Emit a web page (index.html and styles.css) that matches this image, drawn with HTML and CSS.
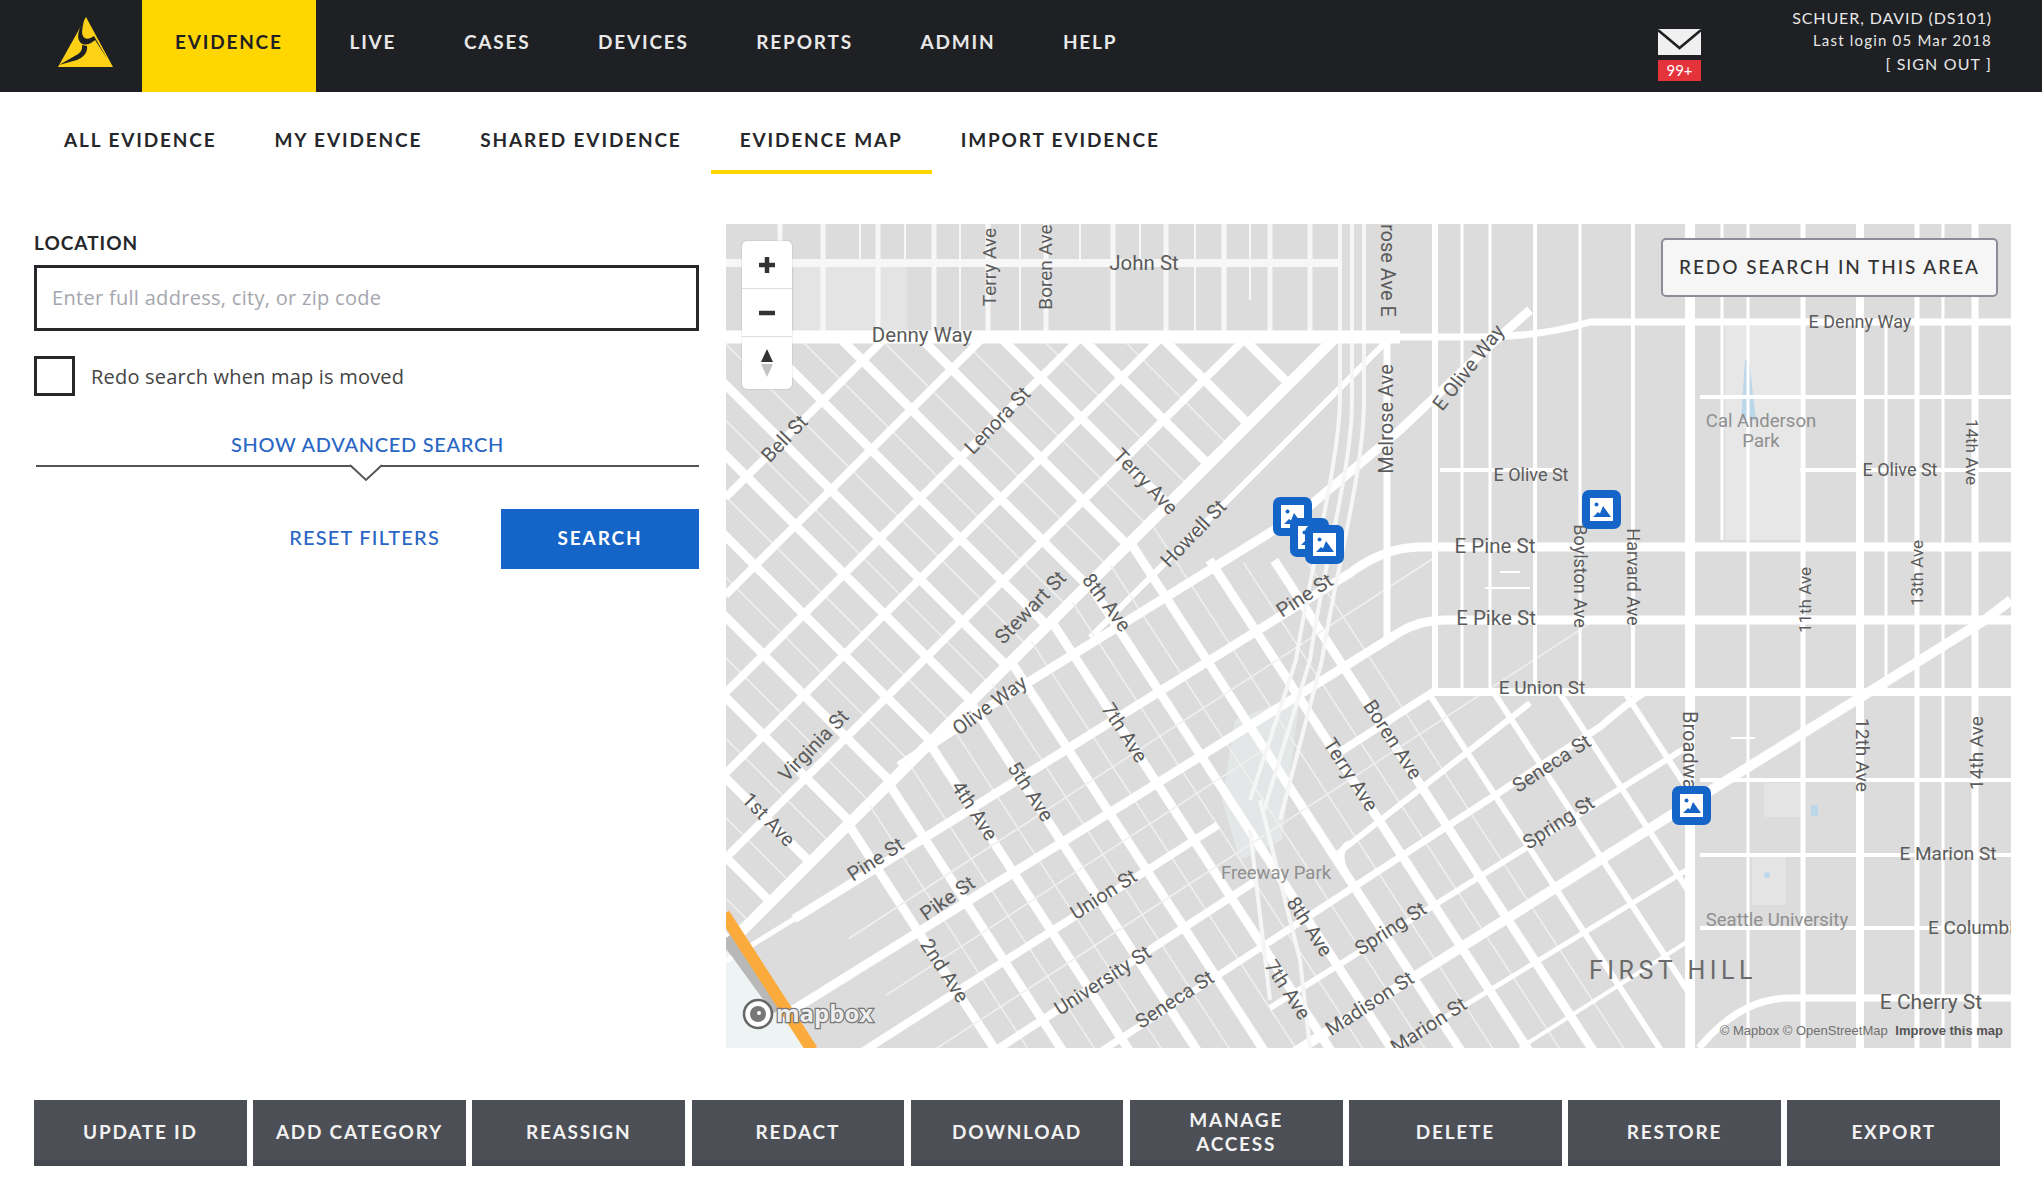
FILE: index.html
```html
<!DOCTYPE html>
<html lang="en">
<head>
<meta charset="UTF-8" />
<meta name="viewport" content="width=device-width, initial-scale=1.0">
<title>Evidence Map</title>
<link rel="stylesheet" href="styles.css">
</head>
<body>
  <header class="topbar">
    <a class="logo" href="#">
      <svg width="60" height="54" viewBox="57 13 60 54">
        <path d="M87 15 L114 65 L59 65 Z" fill="#fcd116"/>
        <path d="M85 18 C80 26 77 35 81 40 C85 45 92 42 96 38 L109 58 L95 34 C91 37 86 38 84 34 C82 30 84 24 85 18Z" fill="#1e2023"/>
        <path d="M83 43 C84 49 80 52 74 55 L60 63 L78 58 C85 55 89 50 88 44 Z" fill="#1e2023"/>
      </svg>
    </a>
    <nav class="mainnav">
      <a class="active" href="#">EVIDENCE</a>
      <a href="#">LIVE</a>
      <a href="#">CASES</a>
      <a href="#">DEVICES</a>
      <a href="#">REPORTS</a>
      <a href="#">ADMIN</a>
      <a href="#">HELP</a>
    </nav>
    <div class="inbox">
      <svg width="43" height="26" viewBox="0 0 43 26">
        <rect width="43" height="26" fill="#f0f0f0"/>
        <path d="M0 1 L21.5 19 L43 1" fill="none" stroke="#1e2023" stroke-width="2.5"/>
      </svg>
      <span class="badge">99+</span>
    </div>
    <div class="userinfo">
      <div>SCHUER, DAVID (DS101)</div>
      <div class="small">Last login 05 Mar 2018</div>
      <div class="signout">[ SIGN OUT ]</div>
    </div>
  </header>

  <nav class="subnav">
    <a href="#">ALL EVIDENCE</a>
    <a href="#">MY EVIDENCE</a>
    <a href="#">SHARED EVIDENCE</a>
    <a class="active" href="#">EVIDENCE MAP</a>
    <a href="#">IMPORT EVIDENCE</a>
  </nav>

  <main class="content">
    <section class="filters">
      <label class="field-label" for="location">LOCATION</label>
      <input class="location" id="location" type="text" placeholder="Enter full address, city, or zip code">
      <label class="redo-check">
        <input type="checkbox">
        <span>Redo search when map is moved</span>
      </label>
      <div class="advanced">
        <a href="#">SHOW ADVANCED SEARCH</a>
        <svg class="notch" width="34" height="18" viewBox="0 0 34 18">
          <path d="M1 1 L17 16 L33 1" fill="#fff" stroke="#555" stroke-width="2"/>
          <rect x="2" y="0" width="30" height="1" fill="#fff"/>
        </svg>
      </div>
      <div class="filter-actions">
        <a href="#">RESET FILTERS</a>
        <button>SEARCH</button>
      </div>
    </section>

    <section class="map">
      <svg class="map-canvas" width="1285" height="824" viewBox="726 224 1285 824">
        <defs>
          <symbol id="pin" viewBox="0 0 39 39">
            <rect width="39" height="39" rx="7" fill="#1565c8"/>
            <rect x="8" y="8" width="23" height="23" fill="#fff"/>
            <circle cx="14.5" cy="14.5" r="2" fill="#1565c8"/>
            <path d="M11 27 L16 22 L18 23.500 L21 16 L29 27 Z" fill="#1565c8"/>
          </symbol>
        </defs>

        <rect x="726" y="224" width="1285" height="824" fill="#dcdcdc"/>

        <!-- light areas -->
        <rect x="794" y="264" width="113" height="68" fill="#e4e4e4"/>
        <rect x="1725" y="325" width="75" height="215" fill="#e7e7e7"/>
        <rect x="1764" y="783" width="41" height="34" fill="#e4e4e4"/>
        <rect x="1752" y="857" width="34" height="48" fill="#e4e4e4"/>
        <path d="M1235 720 L1300 695 L1282 840 L1240 860 L1222 800 Z" fill="#e3e7e7"/>
        <path d="M726 950 L810 1048 L726 1048 Z" fill="#eef3f3"/>
        <path d="M1745 360 L1749 360 L1756 420 L1741 420 Z" fill="#bcd6ea"/>
        <rect x="1811" y="805" width="7" height="11" fill="#bcd6ea"/>
        <circle cx="1767" cy="875" r="3" fill="#bcd6ea"/>

        <!-- north of denny, straight grid -->
        <g stroke="#f7f7f7" fill="none">
          <path stroke-width="5" d="M780 224V337M823 224V337M878 224V337M934 224V337M988 224V337M1046 224V337M1113 224V337M1166 224V337M1224 224V337M1270 224V337M1310 224V337"/>
          <path stroke-width="2" d="M860 224V264M905 224V264M960 224V337M1020 224V337M1080 224V264M1140 224V264M1195 224V337M1250 224V300"/>
          <path stroke-width="8" d="M726 263H1340"/>
        </g>

        <!-- belltown grid, 45 degrees -->
        <g transform="matrix(.707 -.707 .707 .707 0 0)" stroke="#fff" fill="none">
          <path stroke-width="1.500" stroke="#f0f0f0" d="M-122 354V1183M-65 411V1183M-9 467V1183M48 524V1183M105 581V1183M162 638V1183M216 692V1183M270 746V1183M326 802V1183M383 859V1183M440 916V1183M497 973V1183M554 1030V1183"/>
          <path stroke-width="9" d="M-150 326V1183M-93 383V1183M-37 439V1183M20 496V1183M77 553V1183M134 610V1183M191 667V1183M241 717V1183M298 774V1183M355 831V1183M412 888V1183M469 945V1183M526 1002V1183M583 1059V1183M640 1116V1183"/>
          <path stroke-width="8" d="M161 865H388M92 934H457M23 1003H526M-34 1060H583M-94 1120H643"/>
          <path stroke-width="11" d="M-157 1183H707"/>
          <path stroke-width="6" d="M320 1222H745"/>
        </g>

        <!-- downtown grid -->
        <g transform="matrix(.838 -.545 .545 .838 0 0)" stroke="#fff" fill="none">
          <path stroke-width="1.500" stroke="#f0f0f0" d="M290 1150V2000M346 1140V2000M402 1130V2000M459 1115V2000M515 1100V2000M571 1090V2000M623 1080V2000M680 1070V2000M736 1150V2000M790 1180V2000"/>
          <path stroke-width="9" d="M262 1153V2000M318 1142V2000M374 1130V2000M431 1118V2000M487 1106V2000M543 1094V2000M595 1083V2000M652 1071V2000M709 1129V2000M763 1165V2000"/>
          <path stroke-width="6" d="M820 1359V1842M875 1395V1757M930 1431V1673M985 1466V1588"/>
          <path stroke-width="1.500" stroke="#f0f0f0" d="M200 1250H900M200 1318H650M200 1390H1000"/>
        </g>

        <!-- main diagonal streets with their bends -->
        <g stroke="#fff" fill="none">
          <path stroke-width="9" d="M899 766L990 706L1300 514L1400 430L1490 345L1530 310"/>
          <path stroke-width="9" d="M794 919L1350 573Q1385 547 1420 547H2011"/>
          <path stroke-width="5" d="M726 961L794 919"/>
          <path stroke-width="9" d="M780 1018L1400 632Q1420 620 1445 620H2011"/>
          <path stroke-width="8" d="M837 1068L1218 825"/>
          <path stroke-width="8" d="M1340 752L1433 692H2011"/>
          <path stroke-width="8" d="M944 1084L1254 882"/>
          <path stroke-width="6" d="M1350 843Q1336 850 1345 870"/>
          <path stroke-width="6" d="M1336 855L1530 703"/>
          <path stroke-width="7" d="M1100 1052L1600 727Q1625 705 1645 692"/>
          <path stroke-width="6" d="M1270 1008L1690 745"/>
          <path stroke-width="10" d="M1290 1055L1692 802L1985 620L2011 600"/>
          <path stroke-width="5" d="M1395 1048L1690 868"/>
          <path stroke-width="4" d="M1520 1048L1690 940"/>
        </g>

        <!-- i-5 -->
        <g stroke="#f6f6f6" stroke-width="4" fill="none">
          <path d="M1340 224V400C1338 470 1310 570 1296 660L1250 800"/>
          <path d="M1352 224V400C1352 470 1322 570 1310 660L1264 810"/>
          <path d="M1364 224V400C1364 470 1336 570 1322 660L1280 820"/>
          <path d="M1260 800L1300 960L1310 1048"/>
          <path d="M1250 830L1270 1000"/>
        </g>

        <!-- capitol hill and first hill -->
        <g stroke="#fff" fill="none">
          <path stroke-width="13" d="M726 337H1400"/>
          <path stroke-width="7" d="M1400 337H1480Q1540 337 1590 322H2011"/>
          <path stroke-width="7" d="M1387 337V640"/>
          <path stroke-width="6" d="M1435 224V692"/>
          <path stroke-width="3" d="M1462 224V692M1490 224V692M1580 224V692"/>
          <path stroke-width="4" d="M1535 224V692M1633 224V692"/>
          <path stroke-width="10" d="M1690 224V1048"/>
          <path stroke-width="5" d="M1803 224V1048M1917 224V1048"/>
          <path stroke-width="8" d="M1860 224V1048"/>
          <path stroke-width="7" d="M1975 224V1048"/>
          <path stroke-width="3" d="M1748 224V1048M1722 224V540M1886 322V692M1943 224V1048"/>
          <path stroke-width="4" d="M1440 470H1560M1700 397H2011M1800 470H2011M1700 780H2011M1700 855H2011M1700 928H2011"/>
          <path stroke-width="2" d="M1731 738H1755"/>
          <path stroke-width="7" d="M1699 1048Q1740 998 1790 998H2011"/>
          <path stroke-width="2" d="M1500 572H1520M1485 588H1530"/>
        </g>

        <!-- highway, bottom left -->
        <path d="M726 938L778 1010" stroke="#b8b8b8" stroke-width="12" fill="none"/>
        <path d="M724 914L812 1050" stroke="#fbab3b" stroke-width="12" fill="none"/>

        <g class="lbl">
          <text x="1144" y="270">John St</text>
          <text x="922" y="342">Denny Way</text>
          <text class="s19" transform="rotate(-90 990 267)" x="990" y="273">Terry Ave</text>
          <text class="s19" transform="rotate(-90 1046 267)" x="1046" y="273">Boren Ave</text>
          <text class="s20" transform="rotate(90 1387 254)" x="1387" y="260">Melrose Ave E</text>
          <text class="s20" transform="rotate(-90 1387 419)" x="1387" y="425">Melrose Ave</text>
          <text class="s20" transform="rotate(-52 1469 368)" x="1469" y="374">E Olive Way</text>
          <text class="s20" transform="rotate(-46 785 439)" x="785" y="445">Bell St</text>
          <text class="s20" transform="rotate(-46 998 421)" x="998" y="427">Lenora St</text>
          <text class="s20" transform="rotate(46 1145 482)" x="1145" y="488">Terry Ave</text>
          <text class="s20" transform="rotate(-46 1194 534)" x="1194" y="540">Howell St</text>
          <text class="s20" transform="rotate(-46 1031 608)" x="1031" y="614">Stewart St</text>
          <text class="s20" transform="rotate(53 1106 603)" x="1106" y="609">8th Ave</text>
          <text class="s20" transform="rotate(-33 1305 596)" x="1305" y="602">Pine St</text>
          <text x="1495" y="553">E Pine St</text>
          <text x="1496" y="625">E Pike St</text>
          <text class="s18" x="1531" y="481">E Olive St</text>
          <text class="s19" x="1542" y="694">E Union St</text>
          <text class="s18" transform="rotate(90 1580 576)" x="1580" y="582">Boylston Ave</text>
          <text class="s18" transform="rotate(90 1633 577)" x="1633" y="583">Harvard Ave</text>
          <text class="s18" x="1900" y="476">E Olive St</text>
          <text class="s17" transform="rotate(90 1972 452)" x="1972" y="458">14th Ave</text>
          <text class="s17" transform="rotate(-90 1805 600)" x="1805" y="606">11th Ave</text>
          <text class="s17" transform="rotate(-90 1917 573)" x="1917" y="579">13th Ave</text>
          <text class="s18" x="1860" y="328">E Denny Way</text>
          <text class="s20" transform="rotate(90 1689 755)" x="1689" y="761">Broadway</text>
          <text class="s19" transform="rotate(90 1862 755)" x="1862" y="761">12th Ave</text>
          <text class="s19" transform="rotate(-90 1977 753)" x="1977" y="759">14th Ave</text>
          <text class="s19" x="1948" y="860">E Marion St</text>
          <text class="start s19" x="1928" y="934">E Columbia St</text>
          <text class="big" x="1931" y="1009">E Cherry St</text>
          <text class="s20" transform="rotate(-46 814 746)" x="814" y="752">Virginia St</text>
          <text class="s20" transform="rotate(-36 990 706)" x="990" y="712">Olive Way</text>
          <text class="s20" transform="rotate(46 768 820)" x="768" y="826">1st Ave</text>
          <text class="s20" transform="rotate(-33 876 860)" x="876" y="866">Pine St</text>
          <text class="s20" transform="rotate(-35 948 899)" x="948" y="905">Pike St</text>
          <text class="s20" transform="rotate(57 974 811)" x="974" y="817">4th Ave</text>
          <text class="s20" transform="rotate(57 1030 792)" x="1030" y="798">5th Ave</text>
          <text class="s20" transform="rotate(57 1124 733)" x="1124" y="739">7th Ave</text>
          <text class="s20" transform="rotate(57 944 971)" x="944" y="977">2nd Ave</text>
          <text class="s20" transform="rotate(-33 1104 895)" x="1104" y="901">Union St</text>
          <text class="s20" transform="rotate(-33 1103 981)" x="1103" y="987">University St</text>
          <text class="s20" transform="rotate(-33 1175 1000)" x="1175" y="1006">Seneca St</text>
          <text class="s20" transform="rotate(57 1309 927)" x="1309" y="933">8th Ave</text>
          <text class="s20" transform="rotate(57 1287 990)" x="1287" y="996">7th Ave</text>
          <text class="s20" transform="rotate(-33 1391 929)" x="1391" y="935">Spring St</text>
          <text class="s20" transform="rotate(-33 1370 1004)" x="1370" y="1010">Madison St</text>
          <text class="s20" transform="rotate(-33 1429 1026)" x="1429" y="1032">Marion St</text>
          <text class="s20" transform="rotate(57 1350 775)" x="1350" y="781">Terry Ave</text>
          <text class="s20" transform="rotate(57 1392 740)" x="1392" y="746">Boren Ave</text>
          <text class="s20" transform="rotate(-33 1552 764)" x="1552" y="770">Seneca St</text>
          <text class="s20" transform="rotate(-33 1559 823)" x="1559" y="829">Spring St</text>
        </g>
        <g class="lbl poi">
          <text x="1761" y="427">Cal Anderson</text>
          <text x="1761" y="447">Park</text>
          <text x="1777" y="926">Seattle University</text>
          <text x="1276" y="879">Freeway Park</text>
        </g>
        <text class="hood" x="1673" y="979">FIRST HILL</text>

        <use href="#pin" x="1273" y="497" width="39" height="39"/>
        <use href="#pin" x="1290" y="518" width="39" height="39"/>
        <use href="#pin" x="1305" y="525" width="39" height="39"/>
        <use href="#pin" x="1582" y="490" width="39" height="39"/>
        <use href="#pin" x="1672" y="786" width="39" height="39"/>

        <!-- mapbox mark -->
        <circle cx="758" cy="1014" r="14" fill="#fff" stroke="#666" stroke-width="2.500"/>
        <circle cx="758" cy="1014" r="8" fill="#777"/>
        <path d="M753 1014H758V1019Z" fill="#777"/>
        <circle cx="759" cy="1013" r="2" fill="#fff"/>
        <text class="mapbox-word" x="776" y="1022">mapbox</text>
      </svg>

      <div class="map-controls">
        <button aria-label="Zoom in"><svg width="18" height="18" viewBox="0 0 18 18"><path d="M9 1V17M1 9H17" stroke="#333" stroke-width="4.500"/></svg></button>
        <button aria-label="Zoom out"><svg width="18" height="6" viewBox="0 0 18 6"><path d="M1 3H17" stroke="#333" stroke-width="4.500"/></svg></button>
        <button aria-label="Reset north"><svg width="16" height="30" viewBox="0 0 16 30"><path d="M8 1L14 14H2Z" fill="#333"/><path d="M8 29L14 16H2Z" fill="#c4c4c4"/></svg></button>
      </div>
      <button class="redo-area">REDO SEARCH IN THIS AREA</button>
      <div class="attribution">© Mapbox © OpenStreetMap <b>Improve this map</b></div>
    </section>
  </main>

  <div class="actions">
    <button>UPDATE ID</button>
    <button>ADD CATEGORY</button>
    <button>REASSIGN</button>
    <button>REDACT</button>
    <button>DOWNLOAD</button>
    <button>MANAGE<br>ACCESS</button>
    <button>DELETE</button>
    <button>RESTORE</button>
    <button>EXPORT</button>
  </div>
</body>
</html>
```

FILE: styles.css
```css
* {
  box-sizing: border-box;
}
body {
  margin: 0;
  width: 2042px;
  height: 1180px;
  overflow: hidden;
  background: #fff;
  font-family: Lato, "Open Sans", sans-serif;
  color: #25272a;
}
a {
  text-decoration: none;
  color: inherit;
}
button {
  font-family: inherit;
  cursor: pointer;
}

/* top bar */
.topbar {
  display: flex;
  align-items: stretch;
  height: 92px;
  background: #1e2023;
  color: #e8e8e8;
}
.logo {
  width: 142px;
  display: flex;
  align-items: center;
  justify-content: center;
  padding: 0 0 8px 30px;
}
.mainnav {
  display: flex;
}
.mainnav a {
  display: flex;
  align-items: center;
  padding: 0 33.800px 10px;
  font-size: 19px;
  font-weight: 700;
  letter-spacing: 1.800px;
}
.mainnav a.active {
  padding: 0 33px 10px;
  background: #ffd600;
  color: #1e2023;
}
.inbox {
  margin-left: auto;
  margin-top: 29px;
  width: 43px;
  display: flex;
  flex-direction: column;
  gap: 5px;
}
.inbox svg {
  display: block;
}
.badge {
  display: block;
  height: 21px;
  line-height: 21px;
  background: #e5333c;
  color: #fff;
  font-size: 15px;
  text-align: center;
}
.userinfo {
  width: 240px;
  margin-left: 51px;
  margin-right: 50px;
  padding-top: 6px;
  text-align: right;
  font-size: 16px;
  line-height: 23px;
  letter-spacing: .9px;
}
.userinfo .small {
  font-size: 15px;
  letter-spacing: 1.200px;
}
.userinfo .signout {
  letter-spacing: 1.150px;
}

/* sub nav */
.subnav {
  display: flex;
  height: 82px;
  padding-left: 35px;
}
.subnav a {
  display: flex;
  align-items: center;
  padding: 16px 29px 0;
  font-size: 19px;
  font-weight: 700;
  letter-spacing: 1.850px;
  border-bottom: 4px solid transparent;
}
.subnav a.active {
  border-bottom-color: #ffd600;
}

/* search + map */
.content {
  display: flex;
  gap: 27px;
  margin-top: 50px;
  padding-left: 34px;
}
.filters {
  width: 665px;
  padding-top: 7px;
}
.field-label {
  display: block;
  height: 24px;
  line-height: 24px;
  font-size: 19px;
  font-weight: 700;
  letter-spacing: 1px;
  margin-bottom: 10px;
}
.location {
  display: block;
  width: 100%;
  height: 66px;
  border: 3px solid #25272a;
  padding: 0 15px 2px;
  font-family: "Open Sans", sans-serif;
  font-size: 20px;
  letter-spacing: .3px;
  outline: none;
}
.location::placeholder {
  color: #a5a6ae;
}
.redo-check {
  display: flex;
  align-items: center;
  gap: 16px;
  margin-top: 25px;
  font-family: "Open Sans", sans-serif;
  font-size: 20px;
  letter-spacing: .2px;
  color: #444;
}
.redo-check input {
  appearance: none;
  width: 41px;
  height: 40px;
  margin: 0;
  border: 3px solid #25272a;
  background: #fff;
}
.advanced {
  position: relative;
  margin: 29px 0 0 2px;
  height: 42px;
  border-bottom: 2px solid #555;
  text-align: center;
  font-size: 20px;
  font-weight: 500;
  letter-spacing: .7px;
  color: #2a66c4;
  line-height: 38px;
}
.notch {
  position: absolute;
  left: 313px;
  top: 39px;
}
.filter-actions {
  display: flex;
  justify-content: flex-end;
  align-items: center;
  margin-top: 42px;
  gap: 61px;
}
.filter-actions a {
  padding-bottom: 5px;
  font-size: 20px;
  font-weight: 500;
  letter-spacing: 1.200px;
  color: #2a66c4;
}
.filter-actions button {
  width: 198px;
  height: 60px;
  padding: 0 0 4px;
  border: none;
  background: #1565c8;
  color: #fff;
  font-size: 19px;
  font-weight: 700;
  letter-spacing: 1.900px;
}

.map {
  position: relative;
  width: 1285px;
  height: 824px;
  overflow: hidden;
}
.map-canvas {
  display: block;
}
.lbl text {
  font-family: Roboto, sans-serif;
  font-size: 20.500px;
  fill: #5b5b5b;
  text-anchor: middle;
}
.lbl text.start {
  text-anchor: start;
}
.lbl text.big {
  font-size: 21px;
}
.lbl text.s20 {
  font-size: 20px;
}
.lbl text.s19 {
  font-size: 19px;
}
.lbl text.s18 {
  font-size: 18px;
}
.lbl text.s17 {
  font-size: 17px;
}
.lbl.poi text {
  font-size: 18.500px;
  fill: #8f8f8f;
}
.hood {
  font-family: Roboto, sans-serif;
  font-size: 25px;
  fill: #6b6b6b;
  letter-spacing: 4.500px;
  text-anchor: middle;
}
.mapbox-word {
  font-family: "Open Sans", sans-serif;
  font-size: 24px;
  font-weight: 700;
  fill: #eee;
  stroke: #777;
  stroke-width: 2.500px;
  paint-order: stroke;
}
.map-controls {
  position: absolute;
  left: 16px;
  top: 17px;
  width: 50px;
  display: flex;
  flex-direction: column;
  background: #fff;
  border-radius: 5px;
  box-shadow: 0 0 2px rgba(0, 0, 0, .2);
}
.map-controls button {
  height: 48px;
  border: none;
  border-bottom: 1px solid #ddd;
  background: none;
  display: flex;
  align-items: center;
  justify-content: center;
  padding: 0;
}
.map-controls button:last-child {
  height: 52px;
  border-bottom: none;
}
.redo-area {
  position: absolute;
  left: 935px;
  top: 14px;
  width: 337px;
  height: 59px;
  padding: 0 0 2px;
  background: #f6f6f7;
  border: 2px solid #8b8e99;
  border-radius: 5px;
  color: #333;
  font-size: 19px;
  font-weight: 500;
  letter-spacing: 1.950px;
}
.attribution {
  position: absolute;
  right: 8px;
  bottom: 10px;
  font-family: "Liberation Sans", sans-serif;
  font-size: 13px;
  color: #707070;
}
.attribution b {
  color: #555;
  margin-left: 4px;
}

/* bottom buttons */
.actions {
  display: grid;
  grid-template-columns: repeat(9, 1fr);
  gap: 6.500px;
  width: 1966px;
  height: 66px;
  margin: 52px 0 0 34px;
}
.actions button {
  border: none;
  border-bottom: 6px solid #46494f;
  background: #4c4f56;
  color: #f2f2f2;
  font-size: 19px;
  font-weight: 700;
  letter-spacing: 1.750px;
  line-height: 24px;
  padding: 4px 0 0;
}
```
